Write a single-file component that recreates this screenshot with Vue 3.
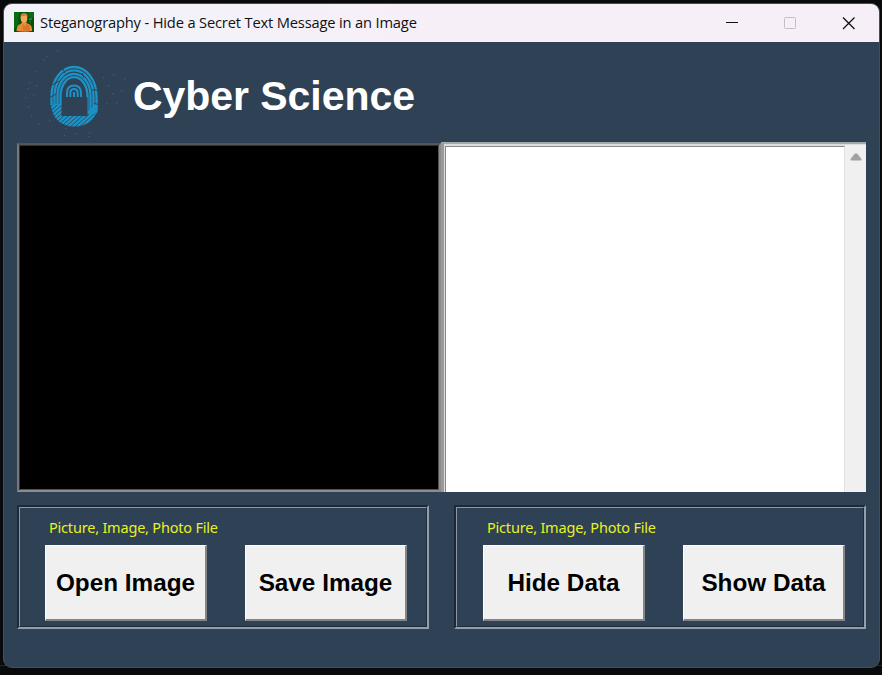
<script setup>
const groups = [
  { label: 'Picture, Image, Photo File', buttons: ['Open Image', 'Save Image'] },
  { label: 'Picture, Image, Photo File', buttons: ['Hide Data', 'Show Data'] },
]
const specks = [
  [29, 40], [25, 55], [28, 64], [38, 81], [46, 14], [43, 17], [57, 8], [113, 32], [103, 35],
  [121, 48], [112, 51], [27, 46], [36, 43], [64, 93], [75, 91], [88, 94], [124, 36], [106, 61],
  [31, 73], [65, 86], [116, 60], [49, 78], [89, 90], [35, 29], [108, 43], [33, 52],
]
const ridges = [
  [22.5, 29], [19.5, 25.6], [16.5, 22.2], [13.5, 18.8],
]
const diagonals = Array.from({ length: 20 }, (_, i) => 96 + i * 4.2)
</script>

<template>
  <div class="screen">
    <div class="window">
      <header class="titlebar">
        <svg class="app-icon" viewBox="0 0 20 20">
          <rect width="20" height="20" fill="#07500c" />
          <path d="M0 0h6l-2 8 1 5-5 4zM14 0h6v5l-4 3z" fill="#0a6b13" />
          <path d="M2.600 19q-.2-6 4.200-7l1.400-2-.6-2h5l-.2 3 2.800 1.300q3.200 1.500 2.800 6.700-7 1.500-15.400 0z" fill="#e98b38" />
          <path d="M8.500 12l2.500 2.500 1.800-2.500 2.500 1.500 1 5H9z" fill="#d9742c" />
          <ellipse cx="10" cy="6.200" rx="3.300" ry="4.300" fill="#eeaa58" />
          <path d="M6.300 6Q6 1 10 1t3.700 4L12 3.500 7.800 4z" fill="#b9813a" />
          <path d="M15 7l1 1M17 6v2M15.500 10h1" stroke="#4b9681" />
        </svg>
        <span class="title">Steganography - Hide a Secret Text Message in an Image</span>
        <svg class="controls" viewBox="0 0 140 20">
          <path d="M6 9.500h12" stroke="#111" />
          <rect x="64.500" y="4.500" width="11" height="11" rx="1" fill="none" stroke="#c4bfc7" />
          <path d="M123 4.500l11.500 11.500M134.500 4.500L123 16" stroke="#111" stroke-width="1.300" />
        </svg>
      </header>

      <main class="content">
        <div class="brand">
          <svg class="logo" viewBox="0 0 129 101">
            <defs>
              <clipPath id="upper"><path d="M40 20h60v40l-8 12h-9V58H58v5H40z" /></clipPath>
              <clipPath id="lower"><path d="M46.500 62h11v12h26V69l8-7h2.500Q92 84.500 70 84.500 50 84.500 46.500 62z" /></clipPath>
            </defs>
            <g fill="#356582" opacity=".7">
              <rect v-for="([x, y], i) in specks" :key="i" :x="x - 4" :y="y" width="1.500" height="1.500" />
            </g>
            <g fill="none" stroke="#1c92c5" stroke-width="2.300">
              <g clip-path="url(#upper)">
                <path v-for="[rx, ry] in ridges" :key="rx" :d="`M${70 - rx} 72V54A${rx} ${ry} 0 0 1 ${70 + rx} 54V76`" />
              </g>
              <g clip-path="url(#lower)" stroke-width="2.500">
                <path v-for="d in diagonals" :key="d" :d="`M40 ${d - 40}L100 ${d - 94}`" />
              </g>
            </g>
            <path d="M59.500 58V50Q59.500 39.500 70 39.500t10.500 10.500v8z" fill="#2f4155" />
            <path d="M63 56v-5q0-7.500 7-7.500t7 7.500v5M66.300 56v-4.500q0-4.500 3.700-4.500t3.700 4.500V56M70 50V56" fill="none" stroke="#1c92c5" stroke-width="2" />
            <rect x="58.500" y="55" width="25" height="18" rx="1" fill="#2f4155" />
            <path d="M48 43l7-4M78 31l2 5M87 48h8M45 56l7-4M59 27l2 4M90 61l5 2" stroke="#2f4155" stroke-width="1" />
          </svg>
          <h1>Cyber Science</h1>
        </div>

        <div class="panes">
          <div class="preview"></div>
          <div class="editor">
            <div class="page"></div>
            <div class="scrollbar">
              <svg viewBox="0 0 12 8"><path d="M5 .5h2L11.500 6q.5 1.500-1 1.500h-9Q0 7.500.5 6z" fill="#a2a2a2" /></svg>
            </div>
          </div>
        </div>

        <div class="groups">
          <section v-for="(group, i) in groups" :key="i" class="group">
            <div class="inner">
              <p>{{ group.label }}</p>
              <div class="buttons">
                <button v-for="name in group.buttons" :key="name">{{ name }}</button>
              </div>
            </div>
          </section>
        </div>
      </main>
    </div>
  </div>
</template>

<style>
body { background: #090a0c; overflow: hidden; }
</style>

<style scoped>
* { box-sizing: border-box; }
.screen { width: 882px; height: 675px; padding: 3px 2px 7px 3px; background: linear-gradient(#090a0c 665px, #252628 665px 666px, #090a0c 666px); }
.window { width: 877px; height: 665px; border: 1px solid #454d55; border-radius: 9px; overflow: hidden; background: #2f4155; }
.titlebar { height: 38px; display: flex; align-items: center; padding-left: 10px; background: linear-gradient(90deg, #f1f3f9, #f7eff8 50%); }
.app-icon { width: 20px; height: 20px; margin-top: -2px; }
.title { margin: -2px 0 0 6px; font: 14.700px/20px "Open Sans", sans-serif; letter-spacing: -.17px; color: #111; white-space: nowrap; }
.controls { width: 140px; height: 20px; margin: -1px 19px 0 auto; }
.content { padding-left: 13px; }
.brand { height: 100px; display: flex; }
.logo { width: 129px; height: 101px; margin-left: -13px; flex: none; }
h1 { margin: 30px 0 0; font: bold 41px/48px "Liberation Sans", sans-serif; letter-spacing: -.05px; color: #fff; white-space: nowrap; }
.panes { width: 849px; height: 350px; display: flex; }
.preview { width: 424px; margin-top: 1px; height: 349px; background: #000; border: 2px solid; border-color: #555 #8c8c8c #8c8c8c #777; box-shadow: inset 1px 1px #333, inset -1px -1px #555; }
.editor { width: 425px; display: flex; border: solid; border-width: 2px 0 0 3px; border-color: #a5a9ab #777 #777 #999; background: #ddd; }
.page { flex: 1; margin: 2px 0 0 1px; background: #fff; border: solid #888; border-width: 1px 1px 0 1px; border-right-color: #e1e1e1; }
.scrollbar { width: 21px; margin-top: 1px; padding-top: 8px; background: #f0f0f0; text-align: center; line-height: 0; }
.scrollbar svg { width: 12px; height: 8px; margin-left: 1px; }
.groups { display: flex; gap: 25px; margin-top: 13px; }
.group { width: 412px; height: 124px; border: 2px solid; border-color: #1c2938 #929eac #929eac #1c2938; }
.inner { height: 100%; padding: 9px 0 0 25px; border: 1px solid; border-color: #8b98a7 #202c3b #202c3b #8b98a7; }
.group:last-child .inner { padding-left: 26px; }
p { margin: 0 0 8px 4px; font: 14.500px/20px "Noto Sans", sans-serif; letter-spacing: -.2px; color: #e7f321; white-space: nowrap; }
.buttons { display: flex; gap: 38px; }
button { width: 162px; height: 76px; padding: 0; border: solid; border-width: 1px 2px 2px 1px; border-color: #fff #858585 #858585 #fff; background: #f0f0f0; color: #000; font: bold 24.300px/30px "Liberation Sans", sans-serif; white-space: nowrap; }
</style>
